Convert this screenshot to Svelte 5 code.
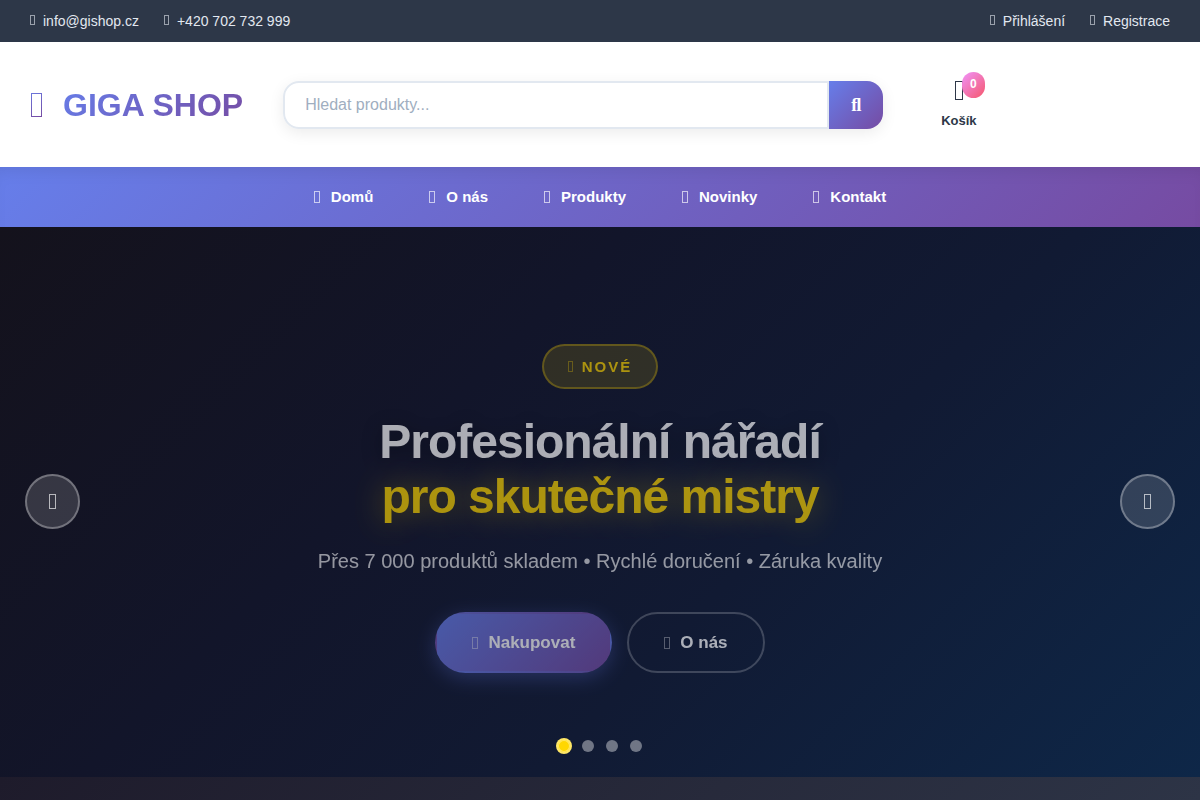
<script>
  const links = [
    { label: 'Domů', target: 'domu' },
    { label: 'O nás', target: 'o-nas' },
    { label: 'Produkty', target: 'produkty' },
    { label: 'Novinky', target: 'novinky' },
    { label: 'Kontakt', target: 'kontakt' }
  ];
  const slides = [1, 2, 3, 4];
  let current = $state(0);
  let query = $state('');

  function move(step) {
    current = (current + step + slides.length) % slides.length;
  }
</script>

<div class="page">
  <div class="topbar">
    <div class="group">
      <a href="mailto:info@gishop.cz"><i class="icon"></i>info@gishop.cz</a>
      <a href="tel:+420702732999"><i class="icon"></i>+420 702 732 999</a>
    </div>
    <div class="group">
      <a href="#prihlaseni"><i class="icon"></i>Přihlášení</a>
      <a href="#registrace"><i class="icon"></i>Registrace</a>
    </div>
  </div>

  <header>
    <a class="logo" href="#domu"><i class="icon"></i><span>GIGA SHOP</span></a>
    <form class="search" onsubmit={(e) => e.preventDefault()}>
      <input type="text" aria-label="Hledat produkty" placeholder="Hledat produkty..." bind:value={query} />
      <button type="submit" aria-label="Hledat">ﬂ</button>
    </form>
    <a class="cart" href="#kosik">
      <span class="basket"><i class="icon"></i><span class="count">0</span></span>
      <span>Košík</span>
    </a>
  </header>

  <nav>
    {#each links as link}
      <a href="#{link.target}"><i class="icon"></i>{link.label}</a>
    {/each}
  </nav>

  <section class="hero">
    <div class="content">
      <div class="tag"><i class="icon"></i>NOVÉ</div>
      <h1>Profesionální nářadí<br /><span>pro skutečné mistry</span></h1>
      <p>Přes 7 000 produktů skladem • Rychlé doručení • Záruka kvality</p>
      <div class="actions">
        <a class="primary" href="#produkty"><i class="icon"></i>Nakupovat</a>
        <a href="#o-nas"><i class="icon"></i>O nás</a>
      </div>
    </div>
    <button class="arrow prev" aria-label="Předchozí" onclick={() => move(-1)}><i class="icon"></i></button>
    <button class="arrow next" aria-label="Další" onclick={() => move(1)}><i class="icon"></i></button>
    <div class="dots">
      {#each slides as slide, i}
        <button class:active={i === current} aria-label="Snímek {slide}" onclick={() => (current = i)}></button>
      {/each}
    </div>
  </section>
  <section class="below"></section>
</div>

<style>
  :global(body) {
    margin: 0;
    font-family: "Liberation Sans", Arial, sans-serif;
    color: #2d3748;
    background: #fff;
  }
  .page {
    display: flex;
    flex-direction: column;
    min-height: 100vh;
  }
  a { color: inherit; text-decoration: none; }
  button, input { font-family: inherit; margin: 0; box-sizing: border-box; }
  button { cursor: pointer; }

  /* Narrow outlined box, sized for each context */
  .icon {
    display: block;
    flex: none;
    box-sizing: border-box;
    width: 5px;
    height: 11px;
    border: 1px solid currentColor;
  }

  .topbar {
    display: flex;
    justify-content: space-between;
    padding: 10px 30px;
    background: #2d3748;
    color: #e2e8f0;
    font-size: 14px;
    line-height: 22px;
  }
  .group { display: flex; gap: 25px; }
  .group a { display: flex; align-items: center; gap: 8px; }
  .group .icon { height: 10px; margin-bottom: 2px; opacity: 0.6; }

  header {
    display: flex;
    align-items: center;
    gap: 40px;
    min-height: 125px;
    padding: 0 30px;
    box-sizing: border-box;
    background: #fff;
  }
  .logo {
    display: flex;
    align-items: center;
    gap: 20px;
    font-size: 32px;
    line-height: 52px;
    font-weight: 800;
    white-space: nowrap;
  }
  .logo .icon {
    width: 11px;
    height: 24px;
    margin: 0 1px;
    border-image: linear-gradient(150deg, #6b76dc, #764ba2) 1;
  }
  .logo span {
    background: linear-gradient(135deg, #667eea, #764ba2);
    -webkit-background-clip: text;
    background-clip: text;
    color: transparent;
  }
  .search {
    display: flex;
    flex: 0 1 600px;
    height: 48px;
    border-radius: 16px;
    box-shadow: 0 4px 15px rgba(0, 0, 0, 0.08);
  }
  .search input {
    flex: 1;
    min-width: 0;
    padding: 0 20px;
    border: 2px solid #e2e8f0;
    border-radius: 16px 0 0 16px;
    font-size: 16px;
    color: #2d3748;
    background: #fff;
    outline: none;
  }
  .search input::placeholder { color: #a0aec0; opacity: 1; }
  .search button {
    width: 54px;
    padding: 2px 0 0;
    border: 0;
    border-radius: 0 16px 16px 0;
    color: #fff;
    font-family: "Liberation Serif", serif;
    font-size: 18px;
    font-weight: 700;
    background: linear-gradient(135deg, #667eea, #764ba2);
  }
  .cart {
    display: flex;
    flex-direction: column;
    align-items: center;
    gap: 8px;
    padding: 0 18px;
    font-size: 13px;
    line-height: 20px;
    font-weight: 600;
  }
  .basket {
    position: relative;
    display: flex;
    align-items: center;
    height: 24px;
  }
  .basket .icon { width: 8px; height: 19px; margin: 0 1px; }
  .count {
    position: absolute;
    top: -7px;
    left: 8px;
    min-width: 23px;
    padding-bottom: 2px;
    box-sizing: border-box;
    text-align: center;
    border-radius: 12px;
    background: linear-gradient(135deg, #f093fb, #f5576c);
    color: #fff;
    font-size: 12px;
    line-height: 24px;
    font-weight: 700;
  }

  nav {
    display: flex;
    justify-content: center;
    background: linear-gradient(135deg, #667eea, #764ba2);
    box-shadow: inset 0 12px 16px -8px rgba(0, 0, 0, 0.08);
  }
  nav a {
    display: flex;
    align-items: center;
    gap: 10px;
    padding: 18px 28px;
    color: #fff;
    font-size: 15px;
    line-height: 24px;
    font-weight: 600;
  }
  nav .icon { width: 6px; height: 12px; margin-right: 1px; opacity: 0.65; }

  .hero {
    position: relative;
    display: flex;
    justify-content: center;
    height: 550px;
    background: linear-gradient(135deg, #14121c 0%, #12152a 36%, #111a33 62%, #0e2748 100%);
  }
  .content {
    display: flex;
    flex-direction: column;
    align-items: center;
    padding-top: 117px;
    opacity: 0.65;
    text-align: center;
    color: #fff;
  }
  .tag {
    display: flex;
    align-items: center;
    gap: 8px;
    padding: 0 24px;
    border: 2px solid rgba(255, 215, 0, 0.4);
    border-radius: 24px;
    background: rgba(255, 215, 0, 0.2);
    color: #ffd700;
    font-size: 15px;
    line-height: 41px;
    font-weight: 700;
    letter-spacing: 2px;
  }
  .tag .icon { width: 5px; margin-right: 1px; opacity: 0.45; }
  h1 {
    margin: 25px 0 0;
    font-size: 48px;
    line-height: 55px;
    font-weight: 800;
    letter-spacing: -1px;
    text-shadow: 0 4px 20px rgba(0, 0, 0, 0.5);
  }
  h1 span {
    color: #ffd700;
    text-shadow: 0 0 30px rgba(255, 215, 0, 0.5);
  }
  p {
    margin: 21px 0 0;
    color: rgba(255, 255, 255, 0.85);
    font-size: 20px;
    line-height: 32px;
  }
  .actions { display: flex; gap: 15px; margin-top: 35px; }
  .actions a {
    display: flex;
    align-items: center;
    gap: 10px;
    padding: 0 35px;
    border: 2px solid rgba(255, 255, 255, 0.3);
    border-radius: 31px;
    font-size: 17px;
    line-height: 57px;
    font-weight: 700;
  }
  .actions .icon { width: 6px; height: 12px; opacity: 0.45; }
  .actions .primary {
    border-color: transparent;
    background: linear-gradient(135deg, #667eea, #764ba2);
    box-shadow: 0 5px 20px rgba(102, 126, 234, 0.4);
  }
  .arrow {
    position: absolute;
    top: 50%;
    display: flex;
    align-items: center;
    justify-content: center;
    width: 55px;
    height: 55px;
    margin-top: -28px;
    padding: 0;
    border: 2px solid rgba(255, 255, 255, 0.3);
    border-radius: 50%;
    background: rgba(255, 255, 255, 0.15);
    color: #fff;
  }
  .arrow .icon { width: 7px; height: 15px; opacity: 0.65; }
  .prev { left: 25px; }
  .next { right: 25px; }
  .dots {
    position: absolute;
    bottom: 25px;
    left: 0;
    right: 0;
    display: flex;
    justify-content: center;
    gap: 12px;
  }
  .dots button {
    width: 12px;
    height: 12px;
    padding: 0;
    border: 0;
    border-radius: 50%;
    background: rgba(255, 255, 255, 0.4);
  }
  .dots .active {
    background: #ffd700;
    box-shadow: inset 0 0 0 1px #ffe766, 0 0 0 2px #ffe766;
  }
  .below {
    flex: 1;
    background: linear-gradient(135deg, #1e1b2b, #2d3446);
  }
</style>
